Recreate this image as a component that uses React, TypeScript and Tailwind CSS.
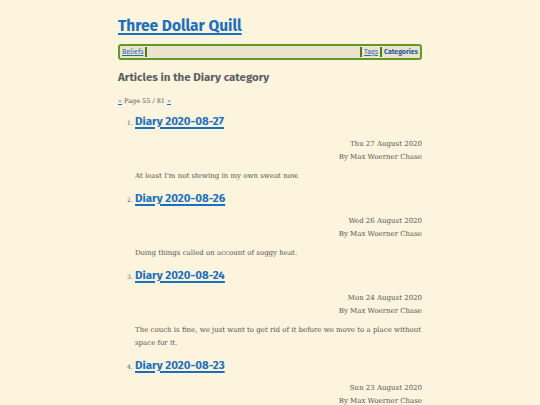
const posts = [
  {
    n: 1,
    title: 'Diary 2020-08-27',
    date: 'Thu 27 August 2020',
    summary: "At least I'm not stewing in my own sweat now.",
  },
  {
    n: 2,
    title: 'Diary 2020-08-26',
    date: 'Wed 26 August 2020',
    summary: 'Doing things called on account of soggy heat.',
  },
  {
    n: 3,
    title: 'Diary 2020-08-24',
    date: 'Mon 24 August 2020',
    summary:
      'The couch is fine, we just want to get rid of it before we move to a place without space for it.',
  },
  {
    n: 4,
    title: 'Diary 2020-08-23',
    date: 'Sun 23 August 2020',
    summary: 'Some more stuff happened, and I wrote it down.',
  },
];

const sans = "font-['Fira_Sans','Noto_Sans',sans-serif]";
const serif = "font-['DejaVu_Serif','Liberation_Serif',serif]";

export default function App() {
  return (
    <div className="h-[405px] overflow-hidden bg-[#fcf4dc] text-[#555]">
      <div className="mx-auto w-[304px] pt-[15px]">
        <h1 className={`${sans} text-[15.5px] font-bold leading-[22px] text-[#1b6fc0]`}>
          <a href="#" className="underline decoration-[1.5px] underline-offset-2">
            Three Dollar Quill
          </a>
        </h1>

        <nav
          className={`${sans} mt-[7px] flex h-[16px] items-center rounded-[3px] border-2 border-[#629a26] bg-[#ebe3ce] px-[2px] text-[7px] text-[#2a6aa8]`}
        >
          <a href="#" className="underline">Beliefs</a>
          <span className="ml-[1px] h-[10px] w-[2px] bg-[#4c7d16]" />
          <span className="flex-1" />
          <span className="mr-[2px] h-[10px] w-[2px] bg-[#4c7d16]" />
          <a href="#" className="underline">Tags</a>
          <span className="mx-[2px] h-[10px] w-[2px] bg-[#4c7d16]" />
          <a href="#" className="font-bold text-[#1d5a9a]">Categories</a>
        </nav>

        <h2 className={`${sans} mt-[9px] text-[11.5px] font-bold leading-[16px] text-[#5a5f62]`}>
          Articles in the Diary category
        </h2>

        <p className={`${serif} mt-[12px] text-[6.5px] leading-[8px] text-[#555]`}>
          <a href="#" className="text-[#1b6fc0] underline">«</a> Page 55 / 81{' '}
          <a href="#" className="text-[#1b6fc0] underline">»</a>
        </p>

        <ol className="mt-[8px] pl-[17px]">
          {posts.map((p) => (
            <li key={p.n} className="mb-[7px]">
              <div className="flex items-baseline">
                <span className={`${serif} -ml-[8px] w-[8px] text-[6px] text-[#555]`}>{p.n}.</span>
                <a
                  href="#"
                  className={`${sans} text-[11.5px] font-bold leading-[16px] text-[#1b6fc0] underline decoration-[1.5px] underline-offset-2`}
                >
                  {p.title}
                </a>
              </div>
              <div className={`${serif} mt-[9px] text-right text-[7px] leading-[12.5px] text-[#555]`}>
                <div>{p.date}</div>
                <div>By Max Woerner Chase</div>
              </div>
              <p className={`${serif} mt-[7px] text-[7px] leading-[13px] text-[#555]`}>{p.summary}</p>
            </li>
          ))}
        </ol>
      </div>
    </div>
  );
}
